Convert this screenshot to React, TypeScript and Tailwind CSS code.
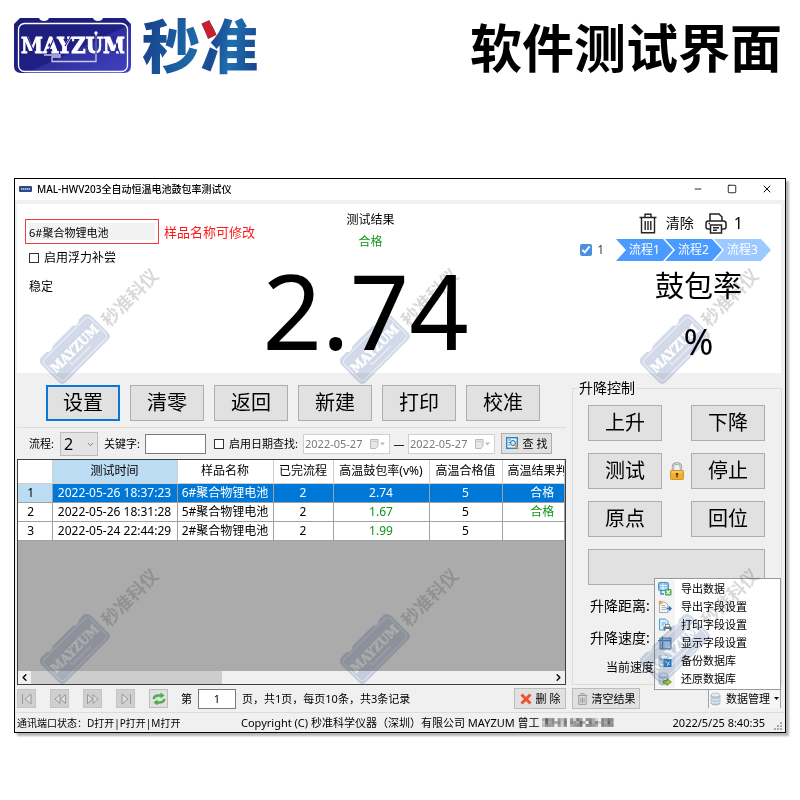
import type { ReactNode } from "react";
import { ChevronDown, ChevronLeft, ChevronRight, Minus, Square, X } from "lucide-react";

const mainButtons = ["设置", "清零", "返回", "新建", "打印", "校准"];

const records = [
  { time: "2022-05-26 18:37:23", name: "6#聚合物锂电池", done: "2", rate: "2.74", limit: "5", result: "合格" },
  { time: "2022-05-26 18:31:28", name: "5#聚合物锂电池", done: "2", rate: "1.67", limit: "5", result: "合格" },
  { time: "2022-05-24 22:44:29", name: "2#聚合物锂电池", done: "2", rate: "1.99", limit: "5", result: "" },
];

const steps = [
  { label: "流程1", color: "bg-[#4a9bff]" },
  { label: "流程2", color: "bg-[#4a9bff]" },
  { label: "流程3", color: "bg-[#9cc9ff]" },
];

// top-left corner of each watermark inside the page
const watermarks = [
  "left-[30px] top-[259px]",
  "left-[330px] top-[259px]",
  "left-[630px] top-[259px]",
  "left-[30px] top-[559px]",
  "left-[330px] top-[559px]",
  "left-[630px] top-[559px]",
];

function Badge() {
  return (
    <svg width="118" height="56" viewBox="0 0 118 56" role="img" aria-label="MAYZUM">
      <defs>
        <linearGradient id="badge" x1="0" y1="0" x2="1" y2="1">
          <stop offset="0" stopColor="#1c1c78" />
          <stop offset="0.55" stopColor="#1f1f86" />
          <stop offset="0.56" stopColor="#2f2f9c" />
          <stop offset="1" stopColor="#4343c4" />
        </linearGradient>
      </defs>
      <path
        d="M6 0H25Q26 3 30 3T35 0H79Q80 3 84 3T89 0H111L117 6V48Q117 55 110 55H7Q0 55 0 48V6Z"
        fill="url(#badge)"
      />
      <rect x="4.500" y="5.500" width="109" height="48" rx="6" fill="none" stroke="#fff" strokeWidth="1.300" />
      <path d="M30 37H46V39H38V43.500H82V16" fill="none" stroke="#c9c9ea" strokeWidth="1.300" />
      <text
        x="59"
        y="35"
        textAnchor="middle"
        fill="#fff"
        stroke="#fff"
        strokeWidth="0.8"
        fontSize="22"
        fontWeight="700"
        fontFamily="'DejaVu Serif Condensed','Liberation Serif',serif"
      >
        MAYZUM
      </text>
      <path d="M13 18L21 36M41 18L33 36M57 18L51 28M99 18L106 36M82 18V36" stroke="#20208a" strokeWidth="1.100" />
      <circle cx="82" cy="15" r="1.700" fill="#fff" />
    </svg>
  );
}

// multiplied onto the page, so white parts leave what is below untouched
function Watermark({ place }: { place: string }) {
  return (
    <svg
      className={`pointer-events-none absolute z-30 overflow-visible mix-blend-multiply ${place}`}
      width="150"
      height="135"
      viewBox="0 0 150 135"
      aria-hidden="true"
    >
      <g transform="rotate(-45 45 90)">
        <path
          d="M14 72H23Q24 74 27 74T31 72H60Q61 74 64 74T68 72H76Q80 74 80 78V102Q80 107 75 107H15Q10 107 10 102V78Q10 74 14 72Z"
          fill="#d2d9e9"
        />
        <rect x="12.500" y="75.500" width="65" height="29" rx="4" fill="none" stroke="#eef1f8" />
        <text
          x="45"
          y="94"
          textAnchor="middle"
          fill="#fff"
          stroke="#fff"
          strokeWidth="0.5"
          fontSize="13"
          fontWeight="700"
          fontFamily="'DejaVu Serif Condensed','Liberation Serif',serif"
        >
          MAYZUM
        </text>
        <path d="M32 96V99H58" fill="none" stroke="#f4f6fb" />
        <text
          x="84"
          y="99"
          fill="#d9d9d9"
          fontSize="18"
          fontWeight="700"
          fontFamily="'Noto Sans CJK SC',sans-serif"
        >
          秒准科仪
        </text>
      </g>
    </svg>
  );
}

function TrashIcon({ className }: { className: string }) {
  return (
    <svg className={className} viewBox="0 0 18 21" fill="none" stroke="currentColor" strokeWidth="1.400">
      <path d="M0.500 4.500H17.500M6 4V1.200H12V4M2.500 5V19.800H15.500V5M6.200 8V17M9 8V17M11.800 8V17" />
    </svg>
  );
}

function PrinterIcon() {
  return (
    <svg className="h-[21px] w-[22px]" viewBox="0 0 22 21" fill="none" stroke="#222" strokeWidth="1.500">
      <path d="M5 8V1H14L17 4V8M5 16H3Q1 16 1 14V10.500Q1 8 3.500 8H18.500Q21 8 21 10.500V14Q21 16 19 16H17" />
      <path d="M5.500 12H16.500V20H5.500ZM8 14.700H14M8 17.200H12M3.500 10.500H5" />
    </svg>
  );
}

function SearchDbIcon() {
  return (
    <svg width="13" height="13" viewBox="0 0 13 13">
      <rect x="0.700" y="0.700" width="10.600" height="10.600" fill="#e8f4fb" stroke="#2e86c1" strokeWidth="1.400" />
      <path d="M2.500 3H5M2.500 5.500H4M2.500 8H4" stroke="#2e86c1" />
      <circle cx="7" cy="6" r="2.500" fill="#cfe8f8" stroke="#3b6e94" />
      <path d="M9 8.200L12.300 12" stroke="#e0a030" strokeWidth="1.800" />
    </svg>
  );
}

function DatabaseIcon({ children }: { children?: ReactNode }) {
  return (
    <svg width="14" height="14" viewBox="0 0 14 14">
      <path d="M1 3V11Q1 13 5.500 13T10 11V3" fill="#b9cbd9" stroke="#8ea5b6" strokeWidth="0.600" />
      <ellipse cx="5.500" cy="3" rx="4.500" ry="2" fill="#e3edf4" stroke="#8ea5b6" strokeWidth="0.600" />
      <path d="M1 6Q1 8 5.500 8T10 6M1 9Q1 11 5.500 11T10 9" fill="none" stroke="#f4f8fb" strokeWidth="0.800" />
      {children}
    </svg>
  );
}

const menuItems: { label: string; icon: ReactNode }[] = [
  {
    label: "导出数据",
    icon: (
      <svg width="14" height="14" viewBox="0 0 14 14">
        <rect x="0.600" y="0.600" width="9.800" height="8" rx="1" fill="#8cc4ec" stroke="#3a8cc8" />
        <path d="M2 3.500H9M2 6H9M5 1V8" stroke="#fff" strokeWidth="0.800" />
        <path d="M3 9V12H6" fill="none" stroke="#3a8cc8" strokeWidth="1.300" />
        <rect x="7" y="7" width="6.500" height="6.500" rx="1" fill="#4fa84f" />
        <path d="M8.500 8.500L12 12M12 8.500L8.500 12" stroke="#fff" strokeWidth="1.100" />
      </svg>
    ),
  },
  {
    label: "导出字段设置",
    icon: (
      <svg width="14" height="14" viewBox="0 0 14 14">
        <path d="M1.500 2H7L10 5V12.500H1.500Z" fill="#f5f5f5" stroke="#a9a9a9" />
        <path d="M3.500 5.500H7M3.500 7.500H8M3.500 9.500H8" stroke="#8aa" strokeWidth="0.800" />
        <circle cx="2.500" cy="2.500" r="2" fill="#f0a050" />
        <path d="M8.500 8.500H13M11 6.500L13 8.500L11 10.500" fill="none" stroke="#2c72c0" strokeWidth="1.400" />
      </svg>
    ),
  },
  {
    label: "打印字段设置",
    icon: (
      <svg width="14" height="14" viewBox="0 0 14 14">
        <path d="M1.500 1H7.500L10 3.500V12H1.500Z" fill="#dceefa" stroke="#4a9fd0" />
        <path d="M3.500 5H8M3.500 7H6" stroke="#4a9fd0" strokeWidth="0.800" />
        <rect x="5.500" y="8.500" width="8" height="4" rx="1" fill="#66727c" />
        <rect x="7.500" y="6.500" width="4" height="2.500" fill="#fff" stroke="#66727c" strokeWidth="0.700" />
        <rect x="7.500" y="11" width="4" height="2" fill="#fff" />
      </svg>
    ),
  },
  {
    label: "显示字段设置",
    icon: (
      <svg width="14" height="14" viewBox="0 0 14 14">
        <rect x="2" y="2" width="11" height="11" fill="#9dbfda" stroke="#5486ad" />
        <path d="M0 4.500H13M4.500 0V13" stroke="#5486ad" />
        <path d="M6.500 7H11.500M6.500 9H11.500M6.500 11H11.500" stroke="#eef5fa" strokeWidth="0.900" />
      </svg>
    ),
  },
  {
    label: "备份数据库",
    icon: (
      <DatabaseIcon>
        <rect x="5.500" y="5" width="8" height="8" fill="#2f86cc" />
        <path d="M7.500 7L11.500 11M11.500 7.500L9 12" stroke="#fff" />
      </DatabaseIcon>
    ),
  },
  {
    label: "还原数据库",
    icon: (
      <DatabaseIcon>
        <path d="M5.500 8.500H9V6.500L13.500 10L9 13.500V11.500H5.500Z" fill="#8bc63e" stroke="#5d8f22" strokeWidth="0.700" />
      </DatabaseIcon>
    ),
  },
];

function PadlockIcon() {
  return (
    <svg width="14" height="18" viewBox="0 0 14 18" aria-hidden="true">
      <path d="M3 9V5Q3 1.500 7 1.500T11 5V9" fill="none" stroke="#9a9a9a" strokeWidth="2.400" />
      <path d="M3 9V5Q3 1.500 7 1.500T11 5V9" fill="none" stroke="#dedede" strokeWidth="1" />
      <rect x="0.500" y="8.500" width="13" height="9" rx="1" fill="#f0b02c" stroke="#c98512" strokeWidth="0.800" />
      <path d="M1.500 10H12.500" stroke="#ffdf80" />
      <circle cx="7" cy="12" r="1.300" fill="#5a3a08" />
      <path d="M7 12V15.500" stroke="#5a3a08" strokeWidth="1.300" />
    </svg>
  );
}

const pagerIcons = [
  { label: "首页", d: "M2.500 2V12M11 2L5 7L11 12Z" },
  { label: "上一页", d: "M7 2.500L2 7L7 11.500ZM12.500 2.500L7.500 7L12.500 11.500Z" },
  { label: "下一页", d: "M1.500 2.500L6.500 7L1.500 11.500ZM7 2.500L12 7L7 11.500Z" },
  { label: "末页", d: "M3 2L9 7L3 12ZM11.500 2V12" },
];

function BigButton({ label, primary, className = "w-[74px]" }: { label?: string; primary?: boolean; className?: string }) {
  return (
    <button
      type="button"
      aria-label={label ? undefined : "空"}
      className={`flex h-9 items-center justify-center bg-[#e1e1e1] text-[20px] leading-6 ${className} ${
        primary ? "border-2 border-[#0a78d7]" : "border border-[#adadad]"
      }`}
    >
      {label}
    </button>
  );
}

function DateBox({ label }: { label: string }) {
  return (
    <div className="flex h-5 w-[87px] items-center border border-[#cfcfcf] bg-white pl-px">
      <input
        aria-label={label}
        disabled
        defaultValue="2022-05-27"
        className="w-[64px] min-w-0 text-[11px] leading-4 text-[#7a7a7a]"
      />
      <svg width="18" height="12" viewBox="0 0 18 12">
        <path d="M1.500 1.500H9V8L7 10.500H1.500Z" fill="#e6e6e6" stroke="#bbb" />
        <path d="M1.500 3.500H9" stroke="#ccc" />
        <path d="M11 4.500H16L13.500 7.500Z" fill="#bbb" />
      </svg>
    </div>
  );
}

function ResultPanel() {
  return (
    <section className="ml-[2px] mr-1 mt-1 grid grid-cols-[31fr_29fr_40fr] bg-white pb-[5px] text-[12px]">
      <div className="pl-2 pt-[15px]">
        <div className="flex items-center gap-[5px] whitespace-nowrap">
          <div className="h-[25px] w-[134px] border border-[#f04040] p-[3px]">
            <input
              aria-label="样品名称"
              defaultValue="6#聚合物锂电池"
              className="block h-full w-full bg-[#f2f2f2] text-[11px] leading-4"
            />
          </div>
          <span className="text-[13px] leading-5 text-[#ff1a1a]">样品名称可修改</span>
        </div>
        <label className="mt-1 flex h-5 items-center gap-[5px] pl-1">
          <input type="checkbox" className="size-[10px] appearance-none border border-[#333] bg-white" />
          启用浮力补尝
        </label>
        <p className="mt-[9px] pl-1 leading-5">稳定</p>
      </div>

      <div className="flex flex-col items-center pt-[6px]">
        <div className="pl-[10px] text-center">
          <h2 className="leading-5">测试结果</h2>
          <p className="mt-[2px] leading-5 text-[#109618]">合格</p>
        </div>
        <p className="whitespace-nowrap text-[104px] leading-[116px]">2.74</p>
      </div>

      <div className="flex flex-col items-end pt-2">
        <div className="flex h-[22px] items-center pr-[38px]">
          <button type="button" className="flex items-center gap-[9px] text-[14px] leading-5">
            <TrashIcon className="h-[21px] w-[18px] text-[#222]" />
            清除
          </button>
          <button type="button" aria-label="打印" className="ml-[11px]">
            <PrinterIcon />
          </button>
          <span className="ml-[7px] text-[16px] leading-5">1</span>
        </div>
        <div className="mt-[5px] flex h-[22px] items-center pr-[10px]">
          <label className="flex items-center gap-[5px] pr-3 leading-5 text-[#444]">
            <input type="checkbox" defaultChecked className="size-3 accent-[#4a90e2]" />1
          </label>
          <ol className="flex text-white">
            {steps.map(({ label, color }, i) => (
              <li
                key={label}
                className={`flex h-[22px] w-[57px] items-center justify-center leading-5 [clip-path:polygon(0_0,47px_0,100%_50%,47px_100%,0_100%,10px_50%)] ${color} ${
                  i > 0 ? "-ml-2" : ""
                }`}
              >
                {label}
              </li>
            ))}
          </ol>
        </div>
        <div className="mt-[7px] flex flex-col items-center pr-[39px]">
          <span className="text-[29px] leading-9">鼓包率</span>
          <span className="mt-[18px] text-[36px] leading-10">%</span>
        </div>
      </div>
    </section>
  );
}

function FilterBar() {
  return (
    <form className="flex h-[31px] items-center whitespace-nowrap pl-3 text-[11px] leading-4">
      <label htmlFor="flow" className="w-[31px]">
        流程:
      </label>
      <div className="relative h-6 w-[38px] border border-[#bdbdbd] bg-[#e4e4e4]">
        <select id="flow" className="h-full w-full appearance-none pl-[3px] text-[16px] leading-5" defaultValue="2">
          <option>2</option>
        </select>
        <ChevronDown className="pointer-events-none absolute right-[2px] top-[7px] size-[9px] text-[#555]" />
      </div>
      <label htmlFor="keyword" className="ml-[6px] w-[41px]">
        关键字:
      </label>
      <input id="keyword" className="h-5 w-[61px] border border-[#7a7a7a] bg-white px-1" />
      <label className="ml-2 flex w-[89px] items-center gap-[5px]">
        <input type="checkbox" className="size-[10px] appearance-none border border-[#333] bg-white" />
        启用日期查找:
      </label>
      <DateBox label="开始日期" />
      <span className="w-[18px] text-center">—</span>
      <DateBox label="结束日期" />
      <button
        type="button"
        className="ml-[6px] flex h-[21px] w-[51px] items-center justify-center gap-1 border border-[#adadad] bg-[#e1e1e1]"
      >
        <SearchDbIcon />查 找
      </button>
    </form>
  );
}

function RecordTable() {
  return (
    <div className="flex flex-1 flex-col overflow-hidden border border-[#404040] bg-[#ababab]">
      <table className="w-full table-fixed border-collapse whitespace-nowrap text-center text-[12px] leading-4">
        <colgroup>
          <col className="w-[34px]" />
          <col className="w-[125px]" />
          <col className="w-[96px]" />
          <col className="w-[60px]" />
          <col className="w-[96px]" />
          <col className="w-[73px]" />
          <col />
        </colgroup>
        <thead>
          <tr className="h-[23px] bg-white *:border-b *:border-r *:border-[#cfcfcf] *:font-normal">
            <td />
            <th className="bg-[#bcdcf4]">测试时间</th>
            <th>样品名称</th>
            <th>已完流程</th>
            <th>高温鼓包率(v%)</th>
            <th>高温合格值</th>
            <th className="overflow-hidden pl-[5px] text-left">高温结果判</th>
          </tr>
        </thead>
        <tbody>
          {records.map((r, i) => (
            <tr
              key={r.time}
              className={`h-[19px] *:border-b *:border-r *:border-[#a0a0a0] ${i === 0 ? "bg-[#0078d7] text-white" : "bg-white"}`}
            >
              <th className={`pr-2 font-normal text-black ${i === 0 ? "bg-[#bcdcf4]" : "bg-white"}`}>{i + 1}</th>
              <td>{r.time}</td>
              <td>{r.name}</td>
              <td>{r.done}</td>
              <td className={i === 0 ? "" : "text-[#109618]"}>{r.rate}</td>
              <td>{r.limit}</td>
              <td className={`pl-[18px] ${i === 0 ? "" : "text-[#109618]"}`}>{r.result}</td>
            </tr>
          ))}
        </tbody>
      </table>
      <div className="mt-auto flex h-[13px] items-center justify-between bg-[#f0f0f0]">
        <ChevronLeft className="mx-[1px] size-[11px]" strokeWidth={3} />
        <div className="mr-auto h-full w-[35%] bg-[#cdcdcd]" />
        <ChevronRight className="mx-[1px] size-[11px]" strokeWidth={3} />
      </div>
    </div>
  );
}

function LiftPanel() {
  return (
    <fieldset className="mt-[7px] w-[210px] flex-none border border-[#dcdcdc] pl-[15px] pr-4">
      <legend className="-ml-[11px] px-[2px] text-[14px] leading-4">升降控制</legend>
      <div className="grid grid-cols-[74px_1fr_74px] items-center gap-y-3 pt-[9px]">
        <BigButton label="上升" />
        <span />
        <BigButton label="下降" />
        <BigButton label="测试" />
        <span className="flex justify-center">
          <PadlockIcon />
        </span>
        <BigButton label="停止" />
        <BigButton label="原点" />
        <span />
        <BigButton label="回位" />
        <BigButton className="col-span-3 w-full" />
      </div>
      <div className="pb-[2px] pl-[2px] pt-[5px]">
        <p className="text-[14px] leading-8">升降距离:</p>
        <p className="text-[14px] leading-8">升降速度:</p>
        <p className="pl-4 text-[12px] leading-7">当前速度</p>
      </div>
    </fieldset>
  );
}

function DataMenu() {
  return (
    <div className="relative ml-auto">
      <button
        type="button"
        className="flex h-[18px] w-[73px] items-center gap-[2px] border-x border-[#a0a0a0] bg-[#f6f6f6] pl-px"
      >
        <DatabaseIcon />
        数据管理
        <svg width="5" height="4" viewBox="0 0 5 4" className="ml-[2px]">
          <path d="M0 0H5L2.500 3Z" fill="#111" />
        </svg>
      </button>
      <ul className="absolute bottom-full right-0 z-20 w-[127px] border border-[#999] bg-white py-px">
        {menuItems.map(({ label, icon }) => (
          <li key={label}>
            <button type="button" className="flex h-[18px] w-full items-center">
              <span className="flex h-full w-[20px] items-center justify-center bg-[#f3f3f3]">{icon}</span>
              <span className="ml-[6px]">{label}</span>
            </button>
          </li>
        ))}
      </ul>
    </div>
  );
}

function Toolbar() {
  return (
    <div className="flex h-[27px] items-center whitespace-nowrap pl-[2px] pr-[4px] text-[11px] leading-4">
      <div className="flex gap-[14px]">
        {pagerIcons.map(({ label, d }) => (
          <button
            key={label}
            type="button"
            aria-label={label}
            className="flex size-[19px] items-center justify-center border border-[#c4c4c4] bg-[#cfcfcf]"
          >
            <svg width="14" height="14" viewBox="0 0 14 14" fill="#dedede" stroke="#999">
              <path d={d} />
            </svg>
          </button>
        ))}
        <button
          type="button"
          aria-label="刷新"
          className="flex size-[19px] items-center justify-center border border-[#bdbdbd] bg-[#e1e1e1]"
        >
          <svg width="14" height="14" viewBox="0 0 14 14" fill="none" stroke="#4fae4c" strokeWidth="2.400">
            <path d="M1.500 7Q2.500 3.500 6 3.500H9M12.500 7Q11.500 10.500 8 10.500H5" />
            <path d="M8.500 0.500L12.500 3.500L8.500 6.500ZM5.500 7.500L1.500 10.500L5.500 13.500Z" fill="#4fae4c" stroke="none" />
          </svg>
        </button>
      </div>
      <label className="ml-[13px] flex items-center gap-[6px]">
        第
        <input defaultValue="1" className="h-5 w-[38px] border border-[#7a7a7a] bg-white text-center" />
      </label>
      <span className="ml-[6px]">页，共1页，每页10条，共3条记录</span>
      <div className="ml-auto flex flex-none gap-[6px] pr-[68px]">
        <button
          type="button"
          className="flex h-[21px] w-[52px] items-center justify-center gap-1 border border-[#bdbdbd] bg-[#e1e1e1]"
        >
          <svg width="12" height="12" viewBox="0 0 12 12" stroke="#f0522e" strokeWidth="3">
            <path d="M1.500 1.500L10.500 10.500M10.500 1.500L1.500 10.500" />
          </svg>
          删 除
        </button>
        <button
          type="button"
          className="flex h-[21px] w-[68px] items-center justify-center gap-1 border border-[#bdbdbd] bg-[#e1e1e1]"
        >
          <TrashIcon className="h-3 w-[11px] text-[#888]" />
          清空结果
        </button>
      </div>
      <div className="flex-none">
        <DataMenu />
      </div>
    </div>
  );
}

// grey levels of the masked phone number, one string per row
const mosaic = ["48560536052750664206576", "28464627065484074626485", "36550526045670665406566"];

function StatusBar() {
  return (
    <footer className="flex h-5 items-center whitespace-nowrap border-t border-[#dcdcdc] pl-[2px] pr-[2px] text-[10px] leading-4">
      <span className="w-[224px]">通讯端口状态：D打开|P打开|M打开</span>
      <span className="text-[11px]">Copyright (C) 秒准科学仪器（深圳）有限公司 MAYZUM 曾工</span>
      <svg width="72" height="9" viewBox="0 0 74 9" className="ml-[2px]" aria-hidden="true">
        {mosaic.map((row, y) =>
          row
            .split("")
            .map((level, x) => (
              <rect key={`${x}-${y}`} x={x * 3.2} y={y * 3} width="3.200" height="3" fill="#444" fillOpacity={Number(level) / 10} />
            ))
        )}
      </svg>
      <span className="ml-auto pr-[9px] text-[11px]">2022/5/25 8:40:35</span>
      <svg width="9" height="9" viewBox="0 0 9 9" fill="#aaa" className="mt-2" aria-hidden="true">
        <path d="M6 0h2v2H6zM3 3h2v2H3zM6 3h2v2H6zM0 6h2v2H0zM3 6h2v2H3zM6 6h2v2H6z" />
      </svg>
    </footer>
  );
}

export default function App() {
  return (
    <div className="relative min-h-screen overflow-hidden bg-white px-[14px] pb-10 font-['Noto_Sans','Noto_Sans_CJK_SC',sans-serif] text-black">
      <header className="flex h-[92px] items-center justify-between pr-1">
        <div className="flex items-center gap-[10px]">
          <Badge />
          <span className="bg-[linear-gradient(#c8202c,#c8202c),linear-gradient(100deg,#173f88,#1d69a8_45%,#1a4a90_60%,#1f6fae_75%,#173f88)] bg-[length:17px_24px,100%_100%] bg-[position:58px_0,0_0] bg-no-repeat bg-clip-text text-[58px] font-black leading-[64px] text-transparent">
            秒准
          </span>
        </div>
        <h1 className="pt-1 whitespace-nowrap text-[52px] font-bold leading-[60px]">软件测试界面</h1>
      </header>

      <main className="mt-[86px] border border-black bg-[#f0f0f0] shadow-[3px_3px_2px_#b5b5b5]">
        <div className="flex h-[21px] items-center bg-white pb-[2px] pl-1 pr-3">
          <svg width="13" height="6" viewBox="0 0 13 6" aria-hidden="true">
            <rect width="13" height="6" rx="1" fill="#2d4a86" />
            <path d="M2 3H11" stroke="#c7d2e8" strokeWidth="1.500" strokeDasharray="1.500 0.500" />
          </svg>
          <span className="ml-[5px] text-[10px] font-medium leading-4">MAL-HWV203全自动恒温电池鼓包率测试仪</span>
          <div className="ml-auto flex gap-6">
            <button type="button" aria-label="最小化">
              <Minus className="size-[10px]" strokeWidth={2} />
            </button>
            <button type="button" aria-label="最大化">
              <Square className="size-[10px]" strokeWidth={2} />
            </button>
            <button type="button" aria-label="关闭">
              <X className="size-3" strokeWidth={2} />
            </button>
          </div>
        </div>

        <ResultPanel />

        <div className="flex gap-[6px] pl-[2px] pr-[3px]">
          <div className="flex min-w-0 flex-1 flex-col pt-3">
            <div className="flex gap-[10px] pl-[29px]">
              {mainButtons.map((label, i) => (
                <BigButton key={label} label={label} primary={i === 0} />
              ))}
            </div>
            <hr className="mt-[6px] border-[#dcdcdc]" />
            <FilterBar />
            <RecordTable />
          </div>
          <LiftPanel />
        </div>

        <Toolbar />
        <StatusBar />
      </main>

      {watermarks.map((place) => (
        <Watermark key={place} place={place} />
      ))}
    </div>
  );
}
